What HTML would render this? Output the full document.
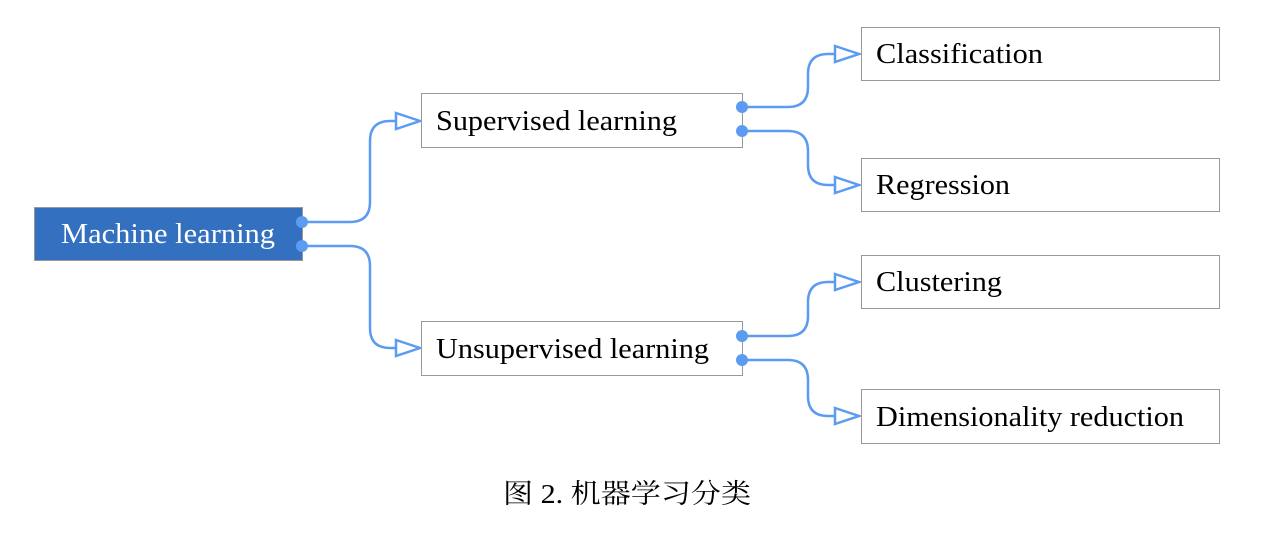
<!DOCTYPE html>
<html><head><meta charset="utf-8"><style>
html,body{margin:0;padding:0;background:#fff;width:1286px;height:546px;overflow:hidden}
text{font-family:"Liberation Serif","Noto Serif CJK SC",serif}
</style></head><body>
<svg width="1286" height="546" viewBox="0 0 1286 546" xmlns="http://www.w3.org/2000/svg">
<g fill="none" stroke="#5b9cf2" stroke-width="2.5">
<path d="M302 222 H350 Q370 222 370 202 V141 Q370 121 390 121 H396"/>
<path d="M302 246 H350 Q370 246 370 266 V328 Q370 348 390 348 H396"/>
<path d="M742 107 H788 Q808 107 808 87 V74 Q808 54 828 54 H835"/>
<path d="M742 131 H788 Q808 131 808 151 V165 Q808 185 828 185 H835"/>
<path d="M742 336 H788 Q808 336 808 316 V302 Q808 282 828 282 H835"/>
<path d="M742 360 H788 Q808 360 808 380 V396 Q808 416 828 416 H835"/>
</g>
<g fill="#fff" stroke="#5b9cf2" stroke-width="2.5" stroke-linejoin="miter">
<path d="M396 113 L420 121 L396 129 Z"/>
<path d="M396 340 L420 348 L396 356 Z"/>
<path d="M835 46 L859 54 L835 62 Z"/>
<path d="M835 177 L859 185 L835 193 Z"/>
<path d="M835 274 L859 282 L835 290 Z"/>
<path d="M835 408 L859 416 L835 424 Z"/>
</g>
<rect x="34.5" y="207.5" width="268" height="53" fill="#3370c0" stroke="#999"/>
<g fill="#fff" stroke="#999">
<rect x="421.5" y="93.5" width="321" height="54"/>
<rect x="421.5" y="321.5" width="321" height="54"/>
<rect x="861.5" y="27.5" width="358" height="53"/>
<rect x="861.5" y="158.5" width="358" height="53"/>
<rect x="861.5" y="255.5" width="358" height="53"/>
<rect x="861.5" y="389.5" width="358" height="54"/>
</g>
<g fill="#5b9cf2">
<circle cx="302" cy="222" r="6"/><circle cx="302" cy="246" r="6"/>
<circle cx="742" cy="107" r="6"/><circle cx="742" cy="131" r="6"/>
<circle cx="742" cy="336" r="6"/><circle cx="742" cy="360" r="6"/>
</g>
<g font-size="29" fill="#000" lengthAdjust="spacingAndGlyphs">
<text x="61" y="243" fill="#fff" textLength="214" lengthAdjust="spacingAndGlyphs">Machine learning</text>
<text x="436" y="130" textLength="241" lengthAdjust="spacingAndGlyphs">Supervised learning</text>
<text x="436" y="358" textLength="273" lengthAdjust="spacingAndGlyphs">Unsupervised learning</text>
<text x="876" y="63" textLength="167" lengthAdjust="spacingAndGlyphs">Classification</text>
<text x="876" y="194" textLength="134" lengthAdjust="spacingAndGlyphs">Regression</text>
<text x="876" y="291" textLength="126" lengthAdjust="spacingAndGlyphs">Clustering</text>
<text x="876" y="426" textLength="308" lengthAdjust="spacingAndGlyphs">Dimensionality reduction</text>
</g>
<text x="503" y="503" font-size="27" fill="#000" textLength="248" lengthAdjust="spacingAndGlyphs">图 2. 机器学习分类</text>
</svg>
</body></html>
